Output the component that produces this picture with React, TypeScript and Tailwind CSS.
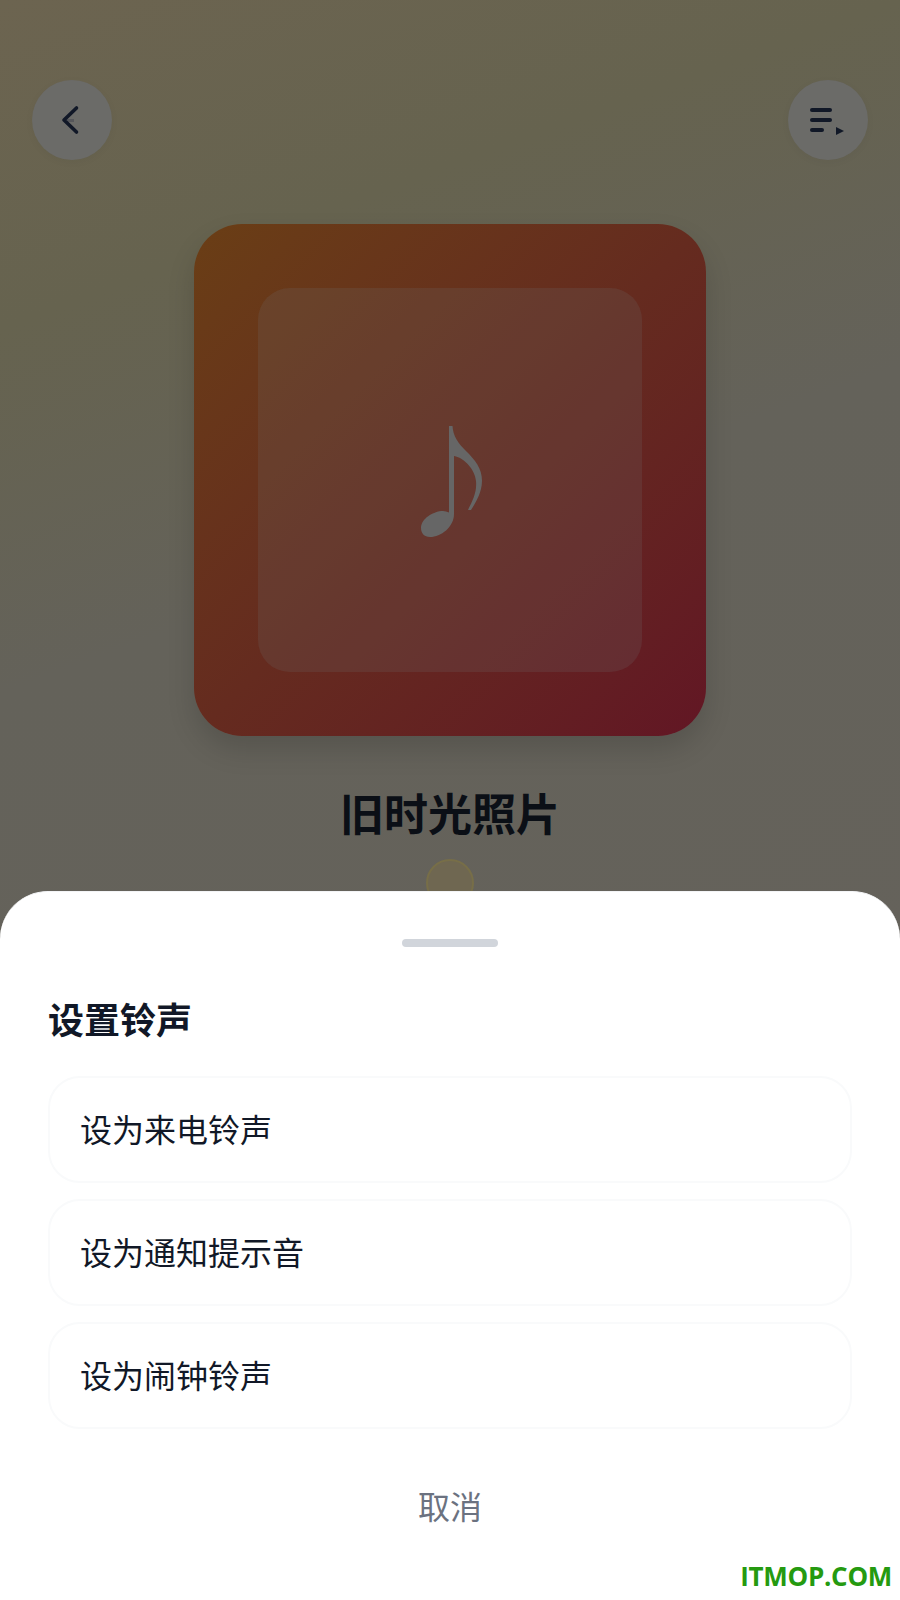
const font = { fontFamily: '"Noto Sans CJK SC", "Noto Sans", sans-serif' };

function Item({ label }: { label: string }) {
  return (
    <div className="flex h-[107px] items-center rounded-[32px] border-2 border-[#f9fafb] bg-white pb-[4px] pl-[30px] text-[32px] leading-none text-[#111827]">
      {label}
    </div>
  );
}

export default function App() {
  return (
    <div className="relative h-[1600px] w-[900px] overflow-hidden bg-[linear-gradient(160deg,#6c6450_0%,#66634f_17%,#64625a_36%,#66625c_100%)]" style={font}>
      <div className="flex items-start justify-between px-8 pt-20">
        <button className="flex h-20 w-20 items-center justify-center rounded-full bg-[#6b6b68] shadow-[0_2px_8px_rgba(0,0,0,0.04)]">
          <svg width="40" height="40" viewBox="0 0 40 40" fill="none">
            <rect x="15" y="19" width="7" height="3" fill="#55565a" />
            <path d="M24.5 8 L12 20 L24.5 32" stroke="#111827" strokeWidth="3.6" strokeLinecap="round" strokeLinejoin="round" />
          </svg>
        </button>
        <button className="flex h-20 w-20 items-center justify-center rounded-full bg-[#6b6b68] shadow-[0_2px_8px_rgba(0,0,0,0.04)]">
          <svg width="40" height="40" viewBox="0 0 40 40" fill="#111827">
            <rect x="2" y="8" width="22" height="4" rx="2" />
            <rect x="2" y="18" width="22" height="4" rx="2" />
            <rect x="2" y="28" width="14" height="4" rx="2" />
            <path d="M28 27 L36 31 L28 35 Z" />
          </svg>
        </button>
      </div>

      <div className="mx-auto mt-16 flex h-[512px] w-[512px] items-center justify-center rounded-[48px] bg-gradient-to-br from-[#6a3e15] via-[#652b1f] to-[#621624] shadow-[0_14px_28px_rgba(0,0,0,0.14)]">
        <div className="flex h-[384px] w-[384px] items-center justify-center rounded-[32px] bg-[#6e6e6e]/20">
          <svg className="ml-[3px] mt-[3px]" width="62" height="112" viewBox="0 0 62 112" fill="#666666">
            <path d="M28 0 H31.5 C32 10 37 17 45 25 C54 34 61 42 61 55 C61 66 55 76 50 84 H47 C52 74 56 66 55 55 C54 44 44 32 33 30 V88 C33 101 20 111 9 111 C3 111 0 107 0 102 C0 93 12 85 22 85 C24 85 26 85.5 28 86.5 Z" />
          </svg>
        </div>
      </div>

      <h1 className="mt-[43px] text-center text-[44px] font-bold leading-[66px] text-[#0b0f16]">旧时光照片</h1>
      <div className="mx-auto mt-[14px] h-12 w-12 rounded-full border-2 border-[#776e48] bg-[#6f6751]" />

      <div className="absolute inset-x-0 bottom-0 h-[709px] rounded-t-[48px] border-t border-[#f3f4f6] bg-white px-12">
        <div className="mx-auto mt-[47px] h-2 w-24 rounded-full bg-[#d1d5db]" />
        <h2 className="mt-[44px] text-[36px] font-bold leading-[54px] text-[#111827]">设置铃声</h2>
        <div className="mt-[31px] flex flex-col gap-4">
          <Item label="设为来电铃声" />
          <Item label="设为通知提示音" />
          <Item label="设为闹钟铃声" />
        </div>
        <div className="mt-[52px] text-center text-[32px] leading-[48px] text-[#6b7280]">取消</div>
      </div>

      <div className="absolute bottom-[11px] right-[8px] text-[26px] font-bold leading-none tracking-[-0.3px] text-[#259a10]" style={{ fontFamily: '"Open Sans", sans-serif' }}>ITMOP.COM</div>
    </div>
  );
}
